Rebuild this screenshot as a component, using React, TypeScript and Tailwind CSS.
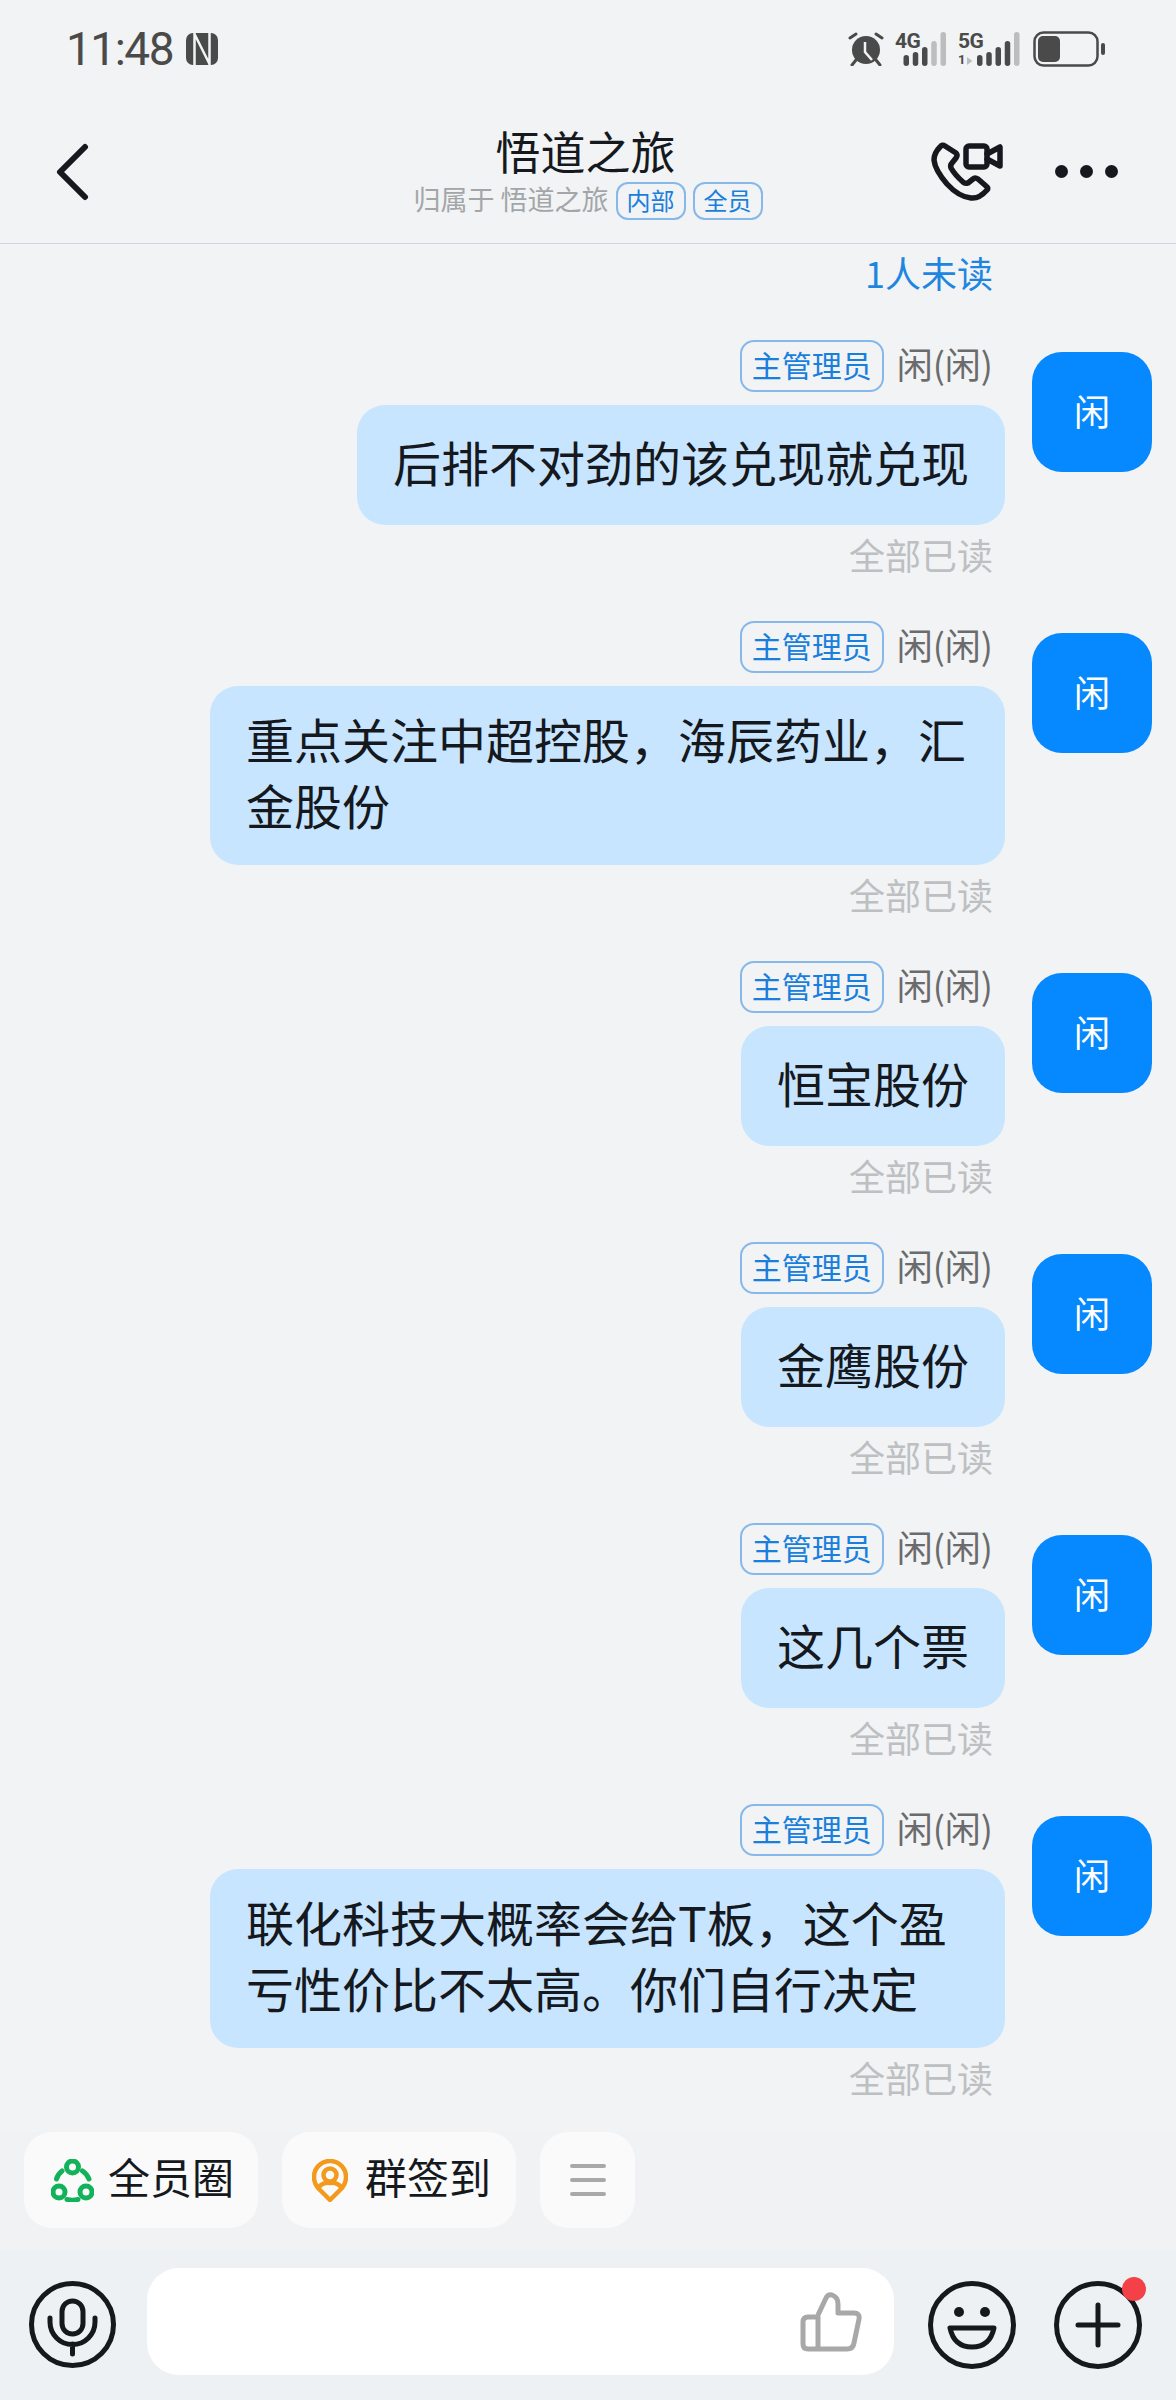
const messages = [
  { text: "后排不对劲的该兑现就兑现" },
  { text: "重点关注中超控股，海辰药业，汇金股份", multi: true },
  { text: "恒宝股份" },
  { text: "金鹰股份" },
  { text: "这几个票" },
  { text: "联化科技大概率会给T板，这个盈亏性价比不太高。你们自行决定", multi: true },
];

function NfcIcon() {
  return (
    <svg width="32" height="32" viewBox="0 0 32 32" className="ml-[13px]">
      <rect x="0" y="0" width="32" height="32" rx="7" fill="#4a4a4a" />
      <path d="M8.500 0V32M8.500 1L23.500 31M23.500 0V32" fill="none" stroke="#f1f3f5" strokeWidth="2.500" />
    </svg>
  );
}

function AlarmIcon() {
  return (
    <svg width="36" height="34" viewBox="0 0 36 34">
      <circle cx="18" cy="18" r="14" fill="#4a4a4a" />
      <path d="M17 10V20L24 28" fill="none" stroke="#f1f3f5" strokeWidth="2.500" />
      <path d="M2 6L8 2M34 6L28 2M8 28L4 33M28 28L32 33" fill="none" stroke="#4a4a4a" strokeWidth="3" strokeLinecap="round" />
    </svg>
  );
}

const bars = [23, 20, 15, 9, 0];

function Signal({ label, sub }: { label: string; sub?: boolean }) {
  const x0 = sub ? 19 : 8.5;
  const light = sub ? 4 : 3;
  return (
    <div className={`relative h-[34px] shrink-0 font-['Roboto',sans-serif] font-bold text-[#4a4a4a] ${sub ? "w-[64px]" : "w-[52px]"}`}>
      <svg width={sub ? 64 : 52} height="34" viewBox={sub ? "0 0 64 34" : "0 0 52 34"}>
        {sub && <path d="M9 25V33L14.500 29Z" fill="#bdbdbd" />}
        {bars.map((top, i) => (
          <rect key={i} x={x0 + i * 9.25} y={top} width="5.500" height={34 - top} rx="2.750" fill={i >= light ? "#bdbdbd" : "#4a4a4a"} />
        ))}
      </svg>
      <span className="absolute left-0 top-[1px] text-[21px] leading-[16px] tracking-[-0.5px]">{label}</span>
      {sub && <span className="absolute bottom-0 left-0 text-[13px] leading-[12px]">1</span>}
    </div>
  );
}

function BatteryIcon() {
  return (
    <svg width="73" height="36" viewBox="0 0 73 36">
      <rect x="1.500" y="1.500" width="63" height="33" rx="9" fill="none" stroke="#4a4a4a" strokeWidth="2.500" />
      <rect x="5" y="5" width="22" height="26" rx="5" fill="#4a4a4a" />
      <rect x="68" y="12" width="4" height="12" rx="2" fill="#4a4a4a" />
    </svg>
  );
}

function PhoneVideoIcon() {
  return (
    <svg width="72" height="60" viewBox="0 0 72 60" fill="none" stroke="#15191d" strokeWidth="5.500" strokeLinejoin="round" strokeLinecap="round">
      <path d="M14 4Q11 2 9 5Q3 11 3 18Q4 28 16 42Q28 55 40 56Q48 57 56 48Q58 46 55 44L47 37Q44 35 42 37L37 41Q34 42 32 40Q24 33 20 26Q19 23 21 21L25 16Q27 13 25 11Z" />
      <rect x="35" y="4" width="21" height="21" rx="3" />
      <path d="M56 12L69 5V24L56 17" />
    </svg>
  );
}

function MicCircle() {
  return (
    <svg width="87" height="87" viewBox="0 0 87 87" fill="none" stroke="#15191d" strokeWidth="5" strokeLinecap="round" className="mt-[13px] shrink-0">
      <circle cx="43.500" cy="43.500" r="41" />
      <rect x="33" y="20" width="21" height="33" rx="10.500" />
      <path d="M21 37V41A22.500 22.500 0 0 0 66 41V37M43.500 63V73" />
    </svg>
  );
}

function SmileCircle() {
  return (
    <svg width="88" height="88" viewBox="0 0 88 88" fill="none" stroke="#15191d" strokeWidth="5" strokeLinecap="round" strokeLinejoin="round" className="mt-[13px] shrink-0">
      <circle cx="44" cy="44" r="41.500" />
      <circle cx="31" cy="31" r="5" fill="#15191d" stroke="none" />
      <circle cx="57" cy="31" r="5" fill="#15191d" stroke="none" />
      <path d="M22 47H66Q62 66 44 66Q26 66 22 47Z" />
    </svg>
  );
}

function PlusCircle() {
  return (
    <div className="relative mt-[13px] h-[88px] w-[88px] shrink-0">
      <svg width="88" height="88" viewBox="0 0 88 88" fill="none" stroke="#15191d" strokeWidth="5" strokeLinecap="round">
        <circle cx="44" cy="44" r="41.500" />
        <path d="M24 44H64M44 24V64" />
      </svg>
      <span className="absolute right-[-4px] top-[-4px] h-[24px] w-[24px] rounded-full bg-[#f44147]" />
    </div>
  );
}

function ThumbIcon() {
  return (
    <svg width="62" height="60" viewBox="0 0 62 60" fill="none" stroke="#a8a8a8" strokeWidth="5" strokeLinejoin="round">
      <path d="M18 23L26 6Q28 2 32 3Q38 5 38 12V21H54Q60 21 59 27L54 51Q53 57 47 57H8Q3 57 3 52V30Q3 25 8 25H18V57" />
    </svg>
  );
}

function CircleIcon() {
  return (
    <svg width="43" height="43" viewBox="0 0 43 43" fill="none" stroke="#12b25b" strokeWidth="5" strokeLinecap="round" className="shrink-0">
      <circle cx="21.500" cy="8" r="6" />
      <circle cx="8" cy="33" r="6" />
      <circle cx="35" cy="33" r="6" />
      <path d="M5.500 20Q7 15 11 12M31.500 12Q36 15 38 20M16 40.500Q21.500 42 27 40.500" />
    </svg>
  );
}

function PinIcon() {
  return (
    <svg width="36" height="43" viewBox="0 0 36 43" fill="none" stroke="#f39a1c" strokeWidth="4.500" strokeLinejoin="round" className="shrink-0">
      <path d="M18 41L6 29Q2 24 2 18A16 16 0 0 1 34 18Q34 24 30 29Z" />
      <circle cx="18" cy="16" r="6.500" />
      <path d="M6 29Q11 23 18 24Q25 23 30 29" />
    </svg>
  );
}

function Message({ text, multi }: { text: string; multi?: boolean }) {
  return (
    <div className="flex justify-end gap-[27px]">
      <div className="flex flex-col items-end">
        <div className="mb-[13px] mr-[12px] flex h-[52px] items-center gap-[13px]">
          <span className="flex h-[52px] w-[144px] items-center justify-center rounded-[14px] border-2 border-[#86b8ea] pb-[3px] text-[30px] text-[#1a7fdc]">
            主管理员
          </span>
          <span className="pb-[6px] text-[36px] text-[#6b6b6b]">闲(闲)</span>
        </div>
        <div
          className={`max-w-[795px] rounded-[28px] bg-[#c8e5ff] px-[36px] text-[48px] leading-[66px] text-[#15191e] ${
            multi ? "pb-[28px] pt-[19px]" : "pb-[31px] pt-[23px]"
          }`}
        >
          {text}
        </div>
        <div className="mb-[43px] mr-[12px] mt-[5px] text-[36px] leading-[48px] text-[#bdbfc2]">全部已读</div>
      </div>
      <div className="mt-[12px] flex h-[120px] w-[120px] shrink-0 items-center justify-center rounded-[30px] bg-[#0688fe] pb-[5px] text-[36px] text-white">
        闲
      </div>
    </div>
  );
}

export default function App() {
  return (
    <div className="flex h-[2400px] w-[1176px] flex-col overflow-hidden bg-[#f1f3f5] font-['Noto_Sans_CJK_SC','Noto_Sans',sans-serif]">
      <div className="flex h-[100px] shrink-0 items-center justify-between pb-[2px] pl-[66px] pr-[70px]">
        <div className="flex items-center">
          <span className="font-['Roboto',sans-serif] text-[46px] leading-none tracking-[-1.500px] text-[#4a4a4a]">11:48</span>
          <NfcIcon />
        </div>
        <div className="flex items-center gap-[11px]">
          <AlarmIcon />
          <Signal label="4G" />
          <Signal label="5G" sub />
          <BatteryIcon />
        </div>
      </div>

      <div className="grid h-[144px] shrink-0 grid-cols-[1fr_auto_1fr] items-center border-b border-[#ccd5dd]">
        <div className="pl-[55px]">
          <svg width="34" height="58" viewBox="0 0 34 58" fill="none" stroke="#15191d" strokeWidth="6" strokeLinecap="round" strokeLinejoin="round">
            <path d="M30 4L5 29L30 54" />
          </svg>
        </div>
        <div className="flex flex-col items-center">
          <div className="mb-[2px] mr-[5px] pb-[2px] text-[45px] leading-[54px] text-[#15191d]">悟道之旅</div>
          <div className="flex h-[38px] items-center gap-[7px]">
            <span className="pb-[2px] text-[27px] text-[#a3a6a9]">归属于 悟道之旅</span>
            <span className="flex h-[38px] w-[70px] items-center justify-center rounded-[12px] border-2 border-[#86b8ea] pb-[2px] text-[24px] text-[#1a7fdc]">
              内部
            </span>
            <span className="flex h-[38px] w-[70px] items-center justify-center rounded-[12px] border-2 border-[#86b8ea] pb-[2px] text-[24px] text-[#1a7fdc]">
              全员
            </span>
          </div>
        </div>
        <div className="flex items-center justify-end gap-[52px] pr-[58px]">
          <PhoneVideoIcon />
          <div className="flex gap-[12px]">
            <span className="h-[13px] w-[13px] rounded-full bg-[#15191d]" />
            <span className="h-[13px] w-[13px] rounded-full bg-[#15191d]" />
            <span className="h-[13px] w-[13px] rounded-full bg-[#15191d]" />
          </div>
        </div>
      </div>

      <div className="min-h-0 flex-1 overflow-hidden pl-[24px] pr-[24px] pt-[4px]">
        <div className="mb-[44px] mr-[159px] text-right text-[36px] leading-[48px] text-[#1f86e0]">1人未读</div>
        {messages.map((m, i) => (
          <Message key={i} text={m.text} multi={m.multi} />
        ))}
      </div>

      <div className="flex shrink-0 gap-[24px] bg-[#f0f2f4] pb-[21px] pl-[24px]">
        <div className="flex h-[96px] w-[234px] items-center gap-[14px] rounded-[28px] bg-[#fafafb] pl-[27px] text-[42px] text-[#15191d]">
          <CircleIcon />
          <span className="pb-[10px]">全员圈</span>
        </div>
        <div className="flex h-[96px] w-[234px] items-center gap-[17px] rounded-[28px] bg-[#fafafb] pl-[30px] text-[42px] text-[#15191d]">
          <PinIcon />
          <span className="pb-[10px]">群签到</span>
        </div>
        <div className="flex h-[96px] w-[95px] flex-col items-center justify-center gap-[10px] rounded-[28px] bg-[#fafafb]">
          <span className="h-[4px] w-[36px] rounded-full bg-[#a8a8a8]" />
          <span className="h-[4px] w-[36px] rounded-full bg-[#a8a8a8]" />
          <span className="h-[4px] w-[36px] rounded-full bg-[#a8a8a8]" />
        </div>
      </div>

      <div className="flex h-[151px] shrink-0 items-start bg-[#eef1f3] pl-[29px] pt-[19px]">
        <MicCircle />
        <div className="ml-[31px] flex h-[107px] w-[747px] items-center justify-end rounded-[32px] bg-white pr-[32px]">
          <ThumbIcon />
        </div>
        <div className="ml-[34px]">
          <SmileCircle />
        </div>
        <div className="ml-[38px]">
          <PlusCircle />
        </div>
      </div>
    </div>
  );
}
